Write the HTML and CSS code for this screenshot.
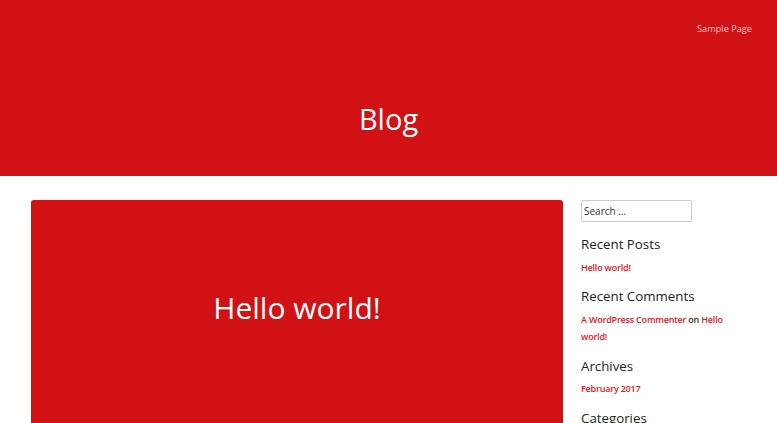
FILE: index.html
```html
<!DOCTYPE html>
<html>

<head>
    <title>Blog</title>
    <link rel="stylesheet" href="styles.css">
</head>

<body>
    <header class="site-header">
        <nav class="main-nav">
            <a href="#">Sample Page</a>
        </nav>
        <h1 class="page-title">Blog</h1>
    </header>

    <div class="site-content">
        <main class="posts">
            <article class="post-card">
                <h2 class="post-title">Hello world!</h2>
            </article>
        </main>

        <aside class="sidebar">
            <div class="widget">
                <input type="search" class="search-field" placeholder="Search &hellip;">
            </div>
            <div class="widget">
                <h3 class="widget-title">Recent Posts</h3>
                <p><a href="#">Hello world!</a></p>
            </div>
            <div class="widget">
                <h3 class="widget-title">Recent Comments</h3>
                <p><a href="#">A WordPress Commenter</a> on <a href="#">Hello world!</a></p>
            </div>
            <div class="widget">
                <h3 class="widget-title">Archives</h3>
                <p><a href="#">February 2017</a></p>
            </div>
            <div class="widget">
                <h3 class="widget-title">Categories</h3>
            </div>
        </aside>
    </div>
</body>

</html>
```

FILE: styles.css
```css
body {
    margin: 0;
    font-family: "Open Sans", sans-serif;
    color: #222;
    background: #fff;
}

a {
    color: #e8161c;
    text-decoration: none;
}

.site-header {
    background: #d21114;
    height: 176px;
    display: flex;
    flex-direction: column;
}

.main-nav {
    display: flex;
    justify-content: flex-end;
    padding: 23px 25px 0 0;
}

.main-nav a {
    color: #f7c2c3;
    font-size: 9.2px;
    line-height: 12px;
}

.page-title {
    margin: 64px 0 0;
    text-align: center;
    color: #fff;
    font-weight: 400;
    font-size: 29px;
}

.site-content {
    display: flex;
    padding: 24px 0 0 31px;
    gap: 18px;
}

.posts {
    width: 532px;
}

.post-card {
    background: #d21114;
    border-radius: 3px;
    height: 260px;
    display: flex;
    justify-content: center;
    padding-top: 87px;
    box-sizing: border-box;
}

.post-title {
    margin: 0;
    color: #fff;
    font-weight: 400;
    font-size: 30px;
}

.sidebar {
    width: 150px;
    font-size: 9px;
    font-weight: 600;
    letter-spacing: -0.2px;
}

.widget {
    margin-bottom: 11px;
}

.widget:first-child {
    margin-bottom: 13px;
}

.search-field {
    display: block;
    width: 111px;
    height: 22px;
    box-sizing: border-box;
    border: 1px solid #ccc;
    border-radius: 2px;
    padding: 0 2px;
    font-family: "Open Sans", sans-serif;
    font-size: 10px;
}

.search-field::placeholder {
    color: #333;
}

.widget-title {
    margin: 0 0 4.5px;
    font-size: 13.3px;
    line-height: 19px;
    font-weight: 400;
    letter-spacing: 0;
}

.widget p {
    margin: 0;
    line-height: 17.5px;
    color: #333;
}
```
